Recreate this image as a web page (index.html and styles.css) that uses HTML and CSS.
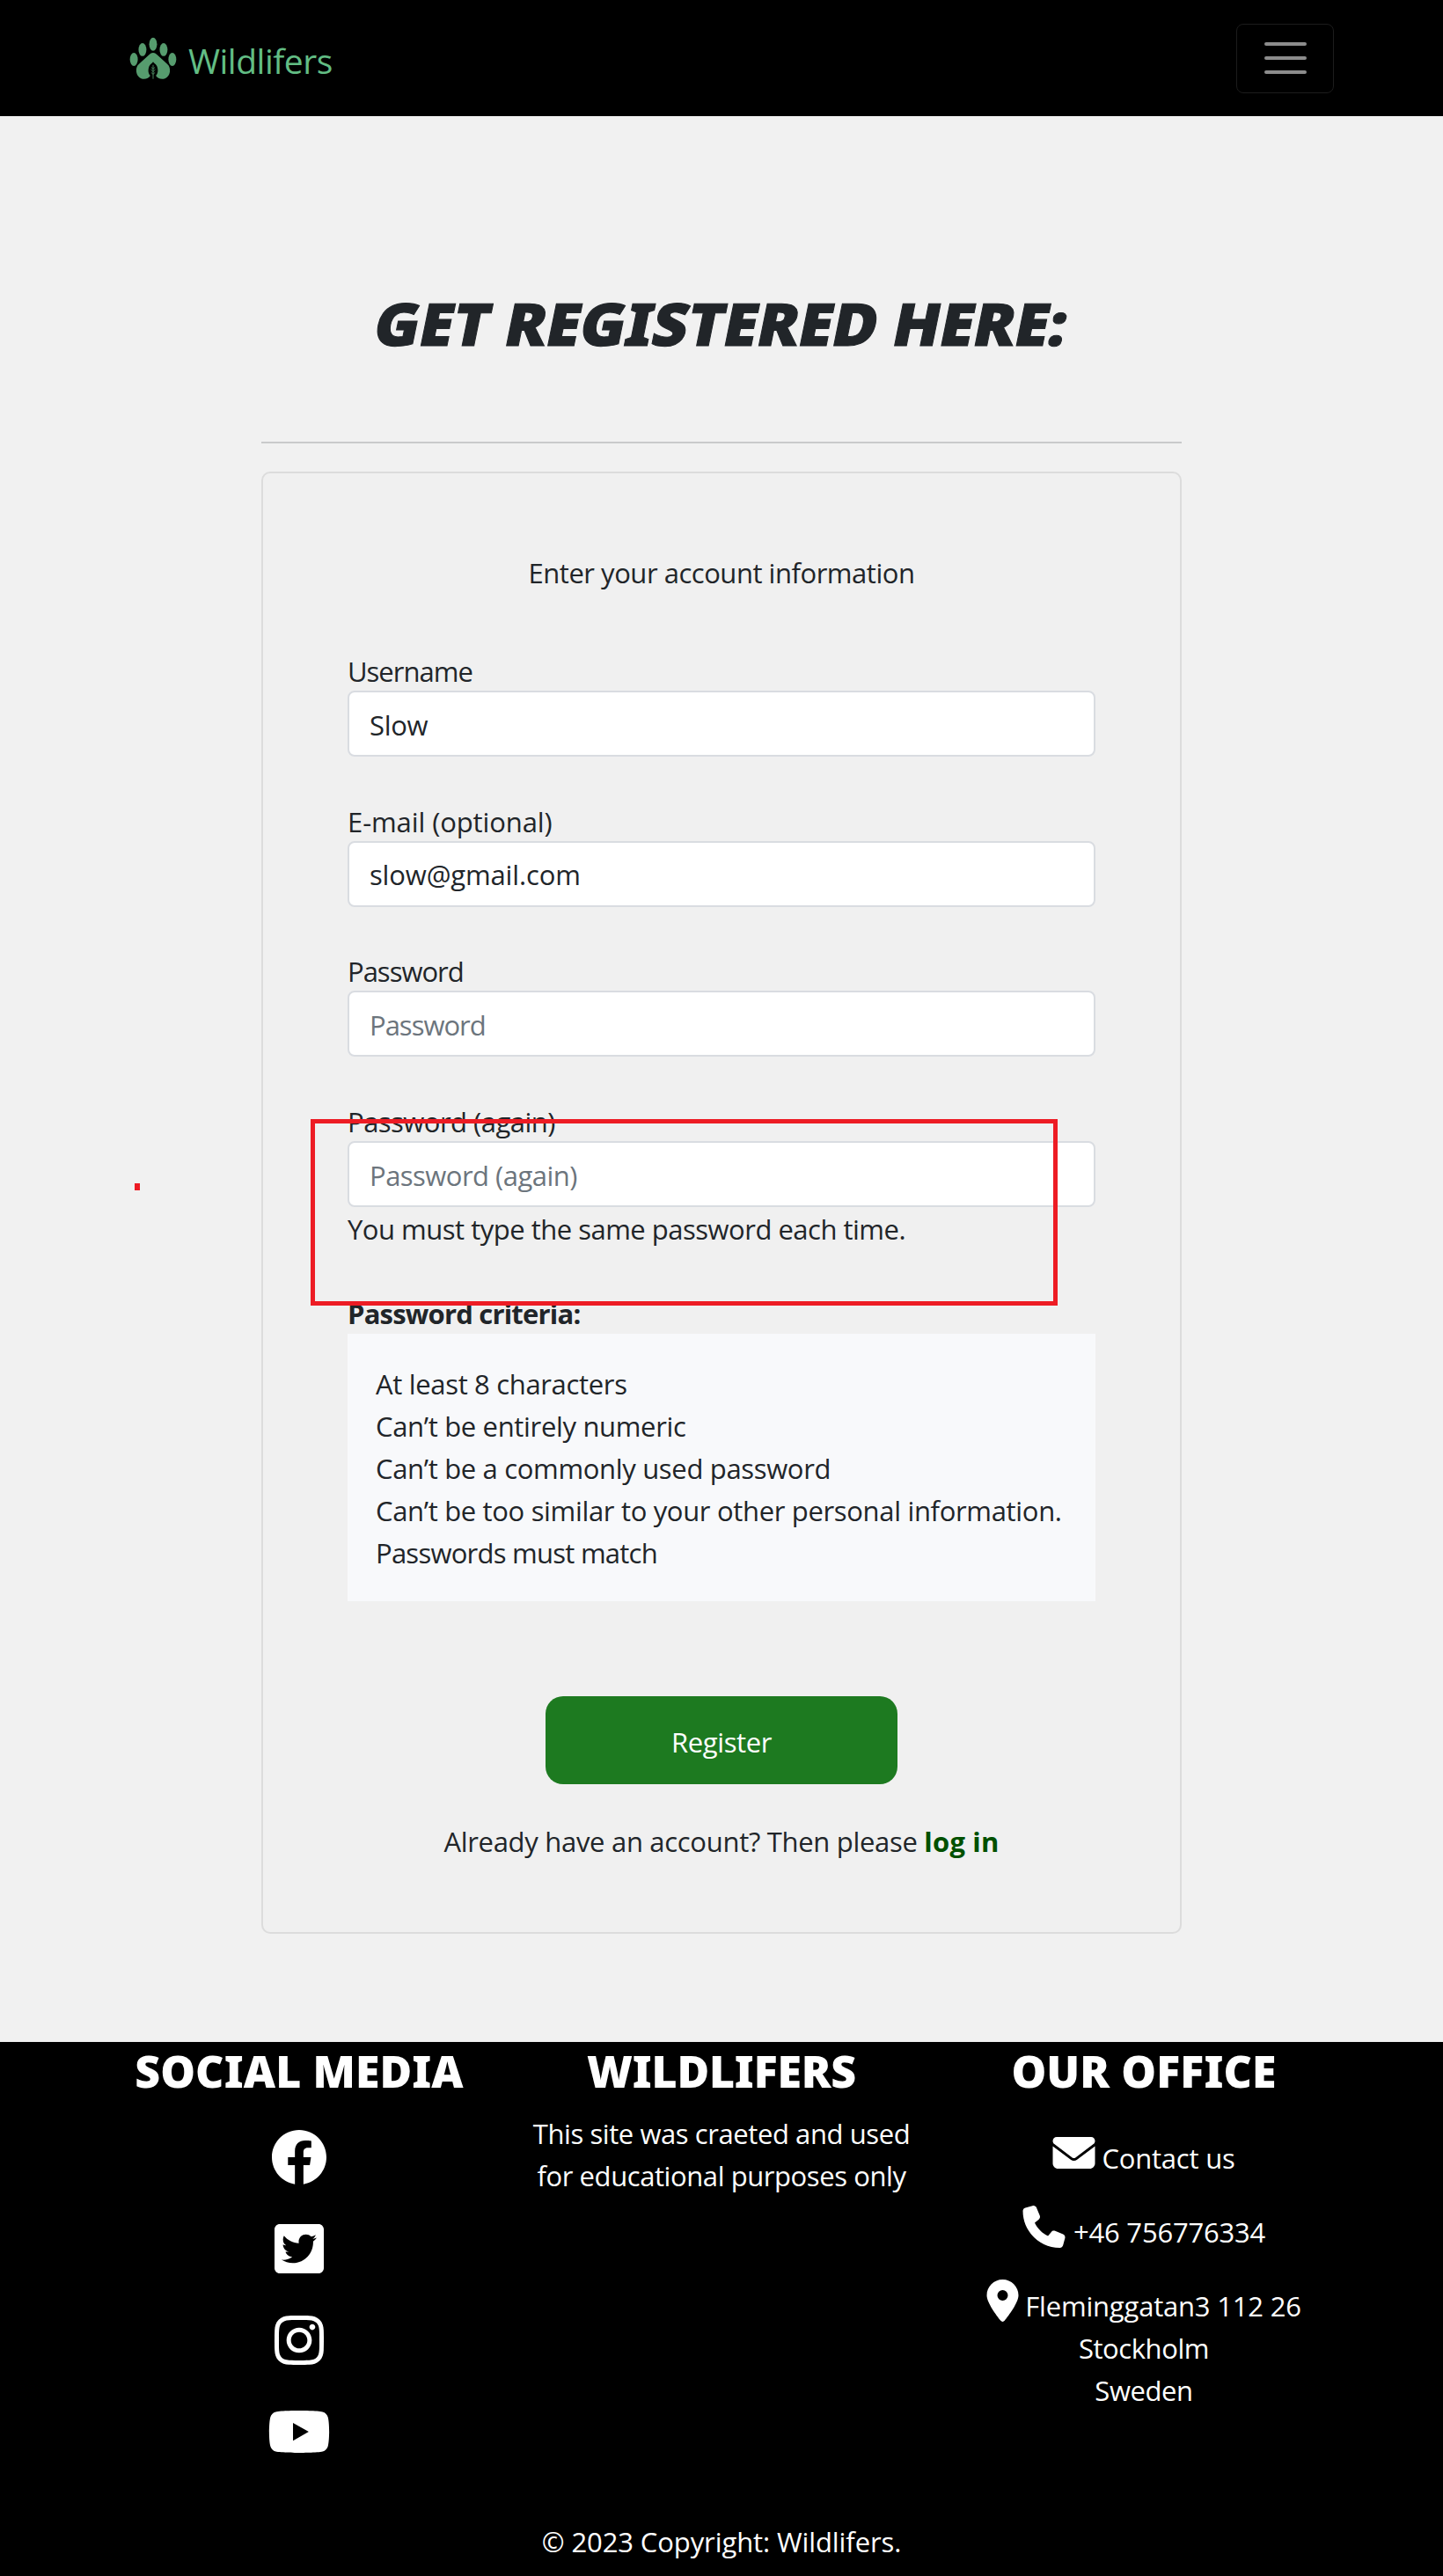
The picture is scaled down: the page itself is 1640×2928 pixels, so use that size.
FILE: index.html
```
<!DOCTYPE html>
<html lang="en">
<head>
<meta charset="utf-8">
<title>Wildlifers</title>
<link rel="stylesheet" href="styles.css">
</head>
<body>
<header class="navbar">
  <a class="brand">
    <svg class="brand-logo" viewBox="52 126 163 145" aria-hidden="true">
      <g fill="#569c6e">
        <ellipse cx="67.500" cy="203" rx="13.500" ry="22.500"/>
        <ellipse cx="97" cy="169.500" rx="13.500" ry="22.500"/>
        <ellipse cx="133.500" cy="151" rx="13.500" ry="22.500"/>
        <ellipse cx="169.500" cy="169.500" rx="13.500" ry="22.500"/>
        <ellipse cx="199.500" cy="203" rx="13.500" ry="22.500"/>
        <path d="M133.500 180C140 180 144 184 149 189L182 219C190 226 192 235 191 245C189 260 178 270 165 270C155 270 147 266 143 259C153 250 150 233 146 225C142 217 136 216 133.500 211C131 216 125 217 121 225C117 233 114 250 124 259C120 266 112 270 102 270C89 270 78 260 76 245C75 235 77 226 85 219L118 189C123 184 127 180 133.500 180Z"/>
      </g>
      <path d="M133.500 222V270M133.500 236L127 230M133.500 236L140 230M133.500 245L126 238M133.500 245L141 238M133.500 254L127 248M133.500 254L140 248" fill="none" stroke="#569c6e" stroke-width="2.500"/>
    </svg>
    <span class="brand-name">Wildlifers</span>
  </a>
  <button class="toggler" aria-label="Toggle navigation"><i></i><i></i><i></i></button>
</header>

<main class="page">
  <h1 class="title">GET REGISTERED HERE:</h1>
  <hr class="rule">
  <form class="card">
    <p class="intro">Enter your account information</p>
    <div class="field"><label class="tight">Username</label><input type="text" value="Slow"></div>
    <div class="field"><label>E-mail (optional)</label><input class="email" type="text" value="slow@gmail.com"></div>
    <div class="field"><label class="tight">Password</label><input class="tight" type="password" placeholder="Password"></div>
    <div class="field last"><label class="snug">Password (again)</label><input class="snug" type="password" placeholder="Password (again)"></div>
    <p class="error">You must type the same password each time.</p>
    <p class="criteria-title">Password criteria:</p>
    <ul class="criteria">
      <li>At least 8 characters</li>
      <li>Can’t be entirely numeric</li>
      <li>Can’t be a commonly used password</li>
      <li>Can’t be too similar to your other personal information.</li>
      <li class="match">Passwords must match</li>
    </ul>
    <button class="submit" type="button">Register</button>
    <p class="login">Already have an account? Then please <a>log in</a></p>
  </form>
</main>

<footer class="footer">
  <div class="columns">
    <section class="column">
      <h2>SOCIAL MEDIA</h2>
      <div class="social">
        <svg viewBox="0 0 512 512"><path d="M504 256C504 119 393 8 256 8S8 119 8 256c0 123.780 90.690 226.380 209.250 245V327.690h-63V256h63v-54.640c0-62.150 37-96.480 93.670-96.480 27.140 0 55.520 4.840 55.520 4.840v61h-31.280c-30.800 0-40.410 19.120-40.410 38.730V256h68.780l-11 71.690h-57.780V501C413.310 482.380 504 379.780 504 256z"/></svg>
        <svg viewBox="-32 0 512 512"><path d="M400 32H48C21.500 32 0 53.500 0 80v352c0 26.500 21.500 48 48 48h352c26.500 0 48-21.500 48-48V80c0-26.500-21.500-48-48-48zm-48.900 158.800c.2 2.800.2 5.700.2 8.500 0 86.700-66 186.600-186.600 186.600-37.200 0-71.700-10.800-100.700-29.400 5.300.6 10.400.8 15.800.8 30.700 0 58.900-10.400 81.400-28-28.800-.6-53-19.500-61.300-45.500 10.100 1.500 19.200 1.500 29.600-1.200-30-6.100-52.500-32.500-52.500-64.400v-.8c8.700 4.900 18.900 7.900 29.600 8.300a65.447 65.447 0 0 1-29.200-54.600c0-12.200 3.200-23.400 8.900-33.100 32.300 39.800 80.800 65.800 135.200 68.600-9.300-44.500 24-80.600 64-80.600 18.900 0 35.900 7.900 47.900 20.700 14.800-2.800 29-8.300 41.600-15.800-4.900 15.200-15.200 28-28.800 36.100 13.200-1.400 26-5.100 37.800-10.200-8.900 13.100-20.100 24.700-32.900 34z"/></svg>
        <svg viewBox="-32 0 512 512"><path d="M224.100 141c-63.600 0-114.900 51.300-114.900 114.900s51.300 114.900 114.900 114.900S339 319.500 339 255.900 287.700 141 224.100 141zm0 189.600c-41.100 0-74.700-33.500-74.700-74.700s33.500-74.700 74.700-74.700 74.700 33.500 74.700 74.700-33.600 74.700-74.700 74.700zm146.400-194.300c0 14.900-12 26.800-26.800 26.800-14.900 0-26.800-12-26.800-26.800s12-26.800 26.800-26.800 26.800 12 26.800 26.800zm76.100 27.200c-1.700-35.900-9.900-67.700-36.200-93.900-26.200-26.200-58-34.400-93.900-36.200-37-2.100-147.900-2.100-184.900 0-35.800 1.700-67.600 9.900-93.900 36.100s-34.400 58-36.200 93.900c-2.100 37-2.100 147.900 0 184.900 1.700 35.900 9.900 67.700 36.200 93.900s58 34.400 93.900 36.200c37 2.100 147.900 2.100 184.900 0 35.900-1.700 67.700-9.900 93.900-36.200 26.200-26.200 34.400-58 36.200-93.900 2.100-37 2.100-147.800 0-184.800zM398.800 388c-7.800 19.600-22.900 34.700-42.600 42.600-29.500 11.700-99.500 9-132.100 9s-102.700 2.600-132.100-9c-19.600-7.800-34.700-22.900-42.600-42.600-11.700-29.500-9-99.500-9-132.100s-2.600-102.700 9-132.100c7.800-19.600 22.900-34.700 42.600-42.600 29.500-11.700 99.500-9 132.100-9s102.700-2.600 132.100 9c19.600 7.800 34.700 22.900 42.600 42.600 11.700 29.500 9 99.500 9 132.100s2.700 102.700-9 132.100z"/></svg>
        <svg class="wide" viewBox="0 0 576 512"><path d="M549.655 124.083c-6.281-23.650-24.787-42.276-48.284-48.597C458.781 64 288 64 288 64S117.220 64 74.629 75.486c-23.497 6.322-42.003 24.947-48.284 48.597-11.412 42.867-11.412 132.305-11.412 132.305s0 89.438 11.412 132.305c6.281 23.650 24.787 41.500 48.284 47.821C117.220 448 288 448 288 448s170.780 0 213.371-11.486c23.497-6.321 42.003-24.171 48.284-47.821 11.412-42.867 11.412-132.305 11.412-132.305s0-89.438-11.412-132.305zm-317.510 213.508V175.185l142.739 81.205-142.739 81.201z"/></svg>
      </div>
    </section>
    <section class="column">
      <h2 class="site-title">WILDLIFERS</h2>
      <p class="about">This site was craeted and used<br>for educational purposes only</p>
    </section>
    <section class="column">
      <h2>OUR OFFICE</h2>
      <div class="contacts">
        <div class="contact">
          <svg viewBox="0 0 512 512"><path d="M48 64C21.500 64 0 85.500 0 112c0 15.100 7.100 29.300 19.200 38.400L236.800 313.600c11.400 8.500 27 8.500 38.400 0L492.800 150.400c12.100-9.100 19.200-23.300 19.200-38.400c0-26.500-21.500-48-48-48H48zM0 176V384c0 35.300 28.700 64 64 64H448c35.300 0 64-28.700 64-64V176L294.400 339.200c-22.800 17.100-54 17.100-76.800 0L0 176z"/></svg>
          <span>Contact us</span>
        </div>
        <div class="contact phone">
          <svg viewBox="0 0 512 512"><path d="M164.900 24.600c-7.700-18.600-28-28.500-47.400-23.200l-88 24C12.100 30.200 0 46 0 64C0 311.400 200.600 512 448 512c18 0 33.800-12.100 38.600-29.500l24-88c5.300-19.400-4.600-39.700-23.200-47.400l-96-40c-16.300-6.800-35.200-2.100-46.300 11.600L304.700 368C234.300 334.700 177.300 277.700 144 207.300L193.300 167c13.700-11.200 18.400-30 11.600-46.300l-40-96z"/></svg>
          <span>+46 756776334</span>
        </div>
        <div class="contact">
          <svg class="pin" viewBox="0 0 384 512"><path d="M215.700 499.200C267 435 384 279.400 384 192C384 86 298 0 192 0S0 86 0 192c0 87.400 117 243 168.300 307.200c12.300 15.300 35.100 15.300 47.400 0zM192 128a64 64 0 1 1 0 128 64 64 0 1 1 0-128z"/></svg>
          <span>Fleminggatan3 112 26</span>
        </div>
        <p class="address">Stockholm<br>Sweden</p>
      </div>
    </section>
  </div>
  <p class="copyright">© 2023 Copyright: Wildlifers.</p>
</footer>

<div class="marker-box"></div>
<div class="marker-dot"></div>
</body>
</html>
```
FILE: styles.css
```
* { box-sizing: border-box; margin: 0; padding: 0; }

body {
  position: relative;
  background: #f1f1f1;
  color: #212529;
  font: 31px/48px "Open Sans", "Noto Sans", sans-serif;
  letter-spacing: -0.42px;
}

.navbar {
  display: flex;
  justify-content: space-between;
  align-items: center;
  height: 132px;
  padding: 0 124px 0 147px;
  background: #000;
}
.brand { display: flex; align-items: center; gap: 13px; }
.brand-logo { width: 54px; height: 48px; }
.brand-name {
  margin-top: 6px;
  font-size: 39px;
  line-height: 60px;
  letter-spacing: -0.5px;
  color: #62bd84;
}
.toggler {
  display: flex;
  flex-direction: column;
  justify-content: center;
  align-items: center;
  gap: 12px;
  width: 111px;
  height: 79px;
  background: none;
  border: 1.5px solid #1c1c1c;
  border-radius: 8px;
}
.toggler i { width: 48px; height: 4px; border-radius: 2px; background: #8c8c8c; }

.page {
  display: flex;
  flex-direction: column;
  width: 1046px;
  height: 2189px;
  margin: 0 auto;
  padding-top: 195px;
}
.title {
  font: 900 67px/80px "Noto Sans", "Open Sans", sans-serif;
  letter-spacing: -0.2px;
  text-align: center;
  white-space: nowrap;
  transform: scaleX(1.043) skewX(-11deg);
  -webkit-text-stroke: 1px #212529;
}
.rule { height: 2px; margin: 95px 0 32px; border: 0; background: #c9cacb; }

.card {
  height: 1662px;
  padding: 89px 96px 0;
  background: #f0f0f0;
  border: 2px solid #dcdcdc;
  border-radius: 10px;
}
.intro { margin-bottom: 64px; text-align: center; letter-spacing: -0.47px; }
.field { margin-bottom: 49.700px; }
.field.last { margin-bottom: 0; }
label { display: block; height: 46px; letter-spacing: -0.1px; }
input {
  display: block;
  width: 100%;
  height: 75px;
  padding: 2px 23px 0;
  background: #fff;
  border: 2px solid #d9dce1;
  border-radius: 8px;
  color: #212529;
  font: inherit;
  letter-spacing: -0.3px;
}
input.email { letter-spacing: -0.15px; }
input::placeholder { color: #6c757d; opacity: 1; }
.tight { letter-spacing: -1px; }
.snug { letter-spacing: -0.52px; }
.error { margin-top: 1px; letter-spacing: -0.5px; }
.criteria-title { margin-top: 48px; height: 47px; font-weight: 700; letter-spacing: -0.8px; }
.criteria {
  height: 304px;
  padding: 33px 32px 0;
  background: #f8f9fb;
  list-style: none;
  letter-spacing: -0.33px;
  white-space: nowrap;
}
.criteria .match { letter-spacing: -0.75px; }
.submit {
  display: block;
  width: 400px;
  height: 100px;
  margin: 108px auto 40px;
  padding-top: 4px;
  background: #1d7a20;
  border: 0;
  border-radius: 20px;
  color: #fff;
  font: inherit;
  letter-spacing: -0.4px;
}
.login { margin-top: 41px; text-align: center; letter-spacing: -0.3px; white-space: nowrap; }
.login a { color: #005000; font-weight: 700; letter-spacing: 0.2px; }

.footer { height: 607px; padding-top: 3px; background: #000; color: #fff; text-align: center; }
.columns {
  display: grid;
  grid-template-columns: repeat(3, 480px);
  justify-content: center;
  height: 541px;
}
h2 { font: 900 50px/60px "Noto Sans", "Open Sans", sans-serif; letter-spacing: 0.1px; }
h2.site-title { letter-spacing: -0.2px; }
.social { display: flex; flex-direction: column; align-items: center; gap: 40px; margin-top: 36px; }
.social svg { width: 64px; height: 64px; fill: #fff; }
.social svg.wide { width: 72px; }
.about { margin-top: 17px; }
.contacts { display: flex; flex-direction: column; gap: 30px; margin-top: 39px; }
.contact { display: flex; justify-content: center; align-items: flex-start; gap: 7px; height: 54px; }
.contact svg { width: 49px; height: 48px; fill: #fff; }
.contact svg.pin { width: 37px; }
.contact span { margin-top: 6px; letter-spacing: -0.2px; }
.contact.phone { gap: 9px; }
.address { margin-top: -30px; }
.copyright { letter-spacing: -0.1px; }

.marker-box {
  position: absolute;
  left: 353px;
  top: 1272px;
  width: 849px;
  height: 212px;
  border: 5px solid #ed1c24;
}
.marker-dot { position: absolute; left: 153px; top: 1345px; width: 6px; height: 8px; background: #ed1c24; }
```
